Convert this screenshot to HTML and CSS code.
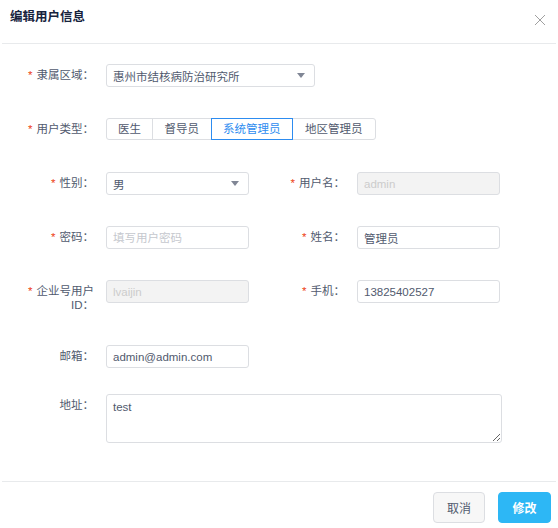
FILE: index.html
```html
<!DOCTYPE html>
<html lang="zh-CN">
<head>
<meta charset="utf-8">
<title>编辑用户信息</title>
<link rel="stylesheet" href="styles.css">
</head>
<body>
<div class="modal">
  <div class="header">
    <span class="title">编辑用户信息</span>
    <svg class="close" width="12" height="12" viewBox="0 0 12 12"><path d="M1 1L11 11M11 1L1 11" stroke="#a0a0a0" stroke-width="1" fill="none"/></svg>
  </div>
  <div class="body">
    <div class="item">
      <label class="label req">隶属区域：</label>
      <div class="select wide"><span>惠州市结核病防治研究所</span><i class="arrow"></i></div>
    </div>
    <div class="item">
      <label class="label req">用户类型：</label>
      <div class="group">
        <span class="gbtn">医生</span><span class="gbtn">督导员</span><span class="gbtn on">系统管理员</span><span class="gbtn">地区管理员</span>
      </div>
    </div>
    <div class="row">
      <div class="item col">
        <label class="label req">性别：</label>
        <div class="select"><span>男</span><i class="arrow"></i></div>
      </div>
      <div class="item col">
        <label class="label req">用户名：</label>
        <input class="input" value="admin" disabled>
      </div>
    </div>
    <div class="row">
      <div class="item col">
        <label class="label req">密码：</label>
        <input class="input" placeholder="填写用户密码">
      </div>
      <div class="item col">
        <label class="label req">姓名：</label>
        <input class="input" value="管理员">
      </div>
    </div>
    <div class="row">
      <div class="item col">
        <label class="label req two">企业号用户ID：</label>
        <input class="input" value="lvaijin" disabled>
      </div>
      <div class="item col">
        <label class="label req">手机：</label>
        <input class="input" value="13825402527">
      </div>
    </div>
    <div class="item mail">
      <label class="label">邮箱：</label>
      <input class="input" value="admin@admin.com">
    </div>
    <div class="item last">
      <label class="label">地址：</label>
      <textarea class="textarea">test</textarea>
    </div>
  </div>
  <div class="footer">
    <button class="btn">取消</button>
    <button class="btn primary">修改</button>
  </div>
</div>
</body>
</html>
```
FILE: styles.css
```css
* { box-sizing: border-box; }
html, body { margin: 0; padding: 0; background: #fff; }
body {
  width: 558px;
  height: 528px;
  font-family: "Liberation Sans", "Noto Sans CJK SC", sans-serif;
  font-size: 11.5px;
  color: #515a6e;
}
.modal { width: 558px; height: 528px; display: flex; flex-direction: column; }
.header {
  height: 44px;
  margin: 0 2px;
  border-bottom: 1px solid #e8eaec;
  display: flex;
  align-items: flex-start;
  justify-content: space-between;
  padding: 9px 10px 0 8px;
}
.title { font-size: 12.5px; font-weight: bold; color: #17233d; line-height: 16px; }
.close { margin-top: 5px; }
.body { padding: 20px 0 0 24px; height: 437px; }
.item { display: flex; align-items: flex-start; margin-bottom: 31px; }
.row { display: flex; }
.col { width: 251px; }
.label {
  width: 82px;
  padding-right: 12px;
  text-align: right;
  line-height: 23px;
  flex: none;
}
.label.two { line-height: 14px; padding-top: 4px; padding-left: 2px; }
.req::before { content: "*"; color: #ed4014; margin-right: 4px; font-family: "Liberation Sans", sans-serif; }
.select, .input, .textarea {
  height: 23px;
  border: 1px solid #dcdee2;
  border-radius: 3px;
  background: #fff;
  font: inherit;
  color: #515a6e;
  padding: 0 6px;
  width: 143px;
  margin: 0;
  outline: none;
}
.select { display: flex; align-items: center; justify-content: space-between; padding-right: 9px; }
.select.wide { width: 209px; }
.arrow { width: 0; height: 0; border-left: 4px solid transparent; border-right: 4px solid transparent; border-top: 5px solid #808695; }
.input:disabled { background: #f3f3f3; color: #ccc; }
.input::placeholder { color: #c5c8ce; }
.group { display: flex; height: 22px; }
.gbtn {
  border: 1px solid #dcdee2;
  margin-left: -1px;
  padding: 0 11.5px;
  line-height: 20px;
  background: #fff;
  position: relative;
}
.gbtn:first-child { margin-left: 0; border-radius: 3px 0 0 3px; padding: 0 11px; }
.gbtn:last-child { border-radius: 0 3px 3px 0; padding: 0 12px; }
.gbtn.on { border-color: #2d8cf0; color: #2d8cf0; z-index: 1; }
.mail { margin-top: 2px; margin-bottom: 26px; }
.last { margin-bottom: 0; }
.textarea { width: 396px; height: 49px; padding: 4px 6px; resize: vertical; line-height: 16px; }
.footer {
  margin: 0 2px;
  border-top: 1px solid #e8eaec;
  display: flex;
  justify-content: flex-end;
  gap: 13px;
  padding: 10px 5px 0 0;
}
.btn {
  height: 31px;
  width: 52px;
  border: 1px solid #dcdee2;
  border-radius: 4px;
  background: #f7f7f7;
  font: inherit;
  font-size: 12px;
  color: #515a6e;
  padding: 0;
}
.btn.primary { width: 53px; background: #2db7f5; border-color: #2db7f5; color: #fff; font-weight: bold; }
```
